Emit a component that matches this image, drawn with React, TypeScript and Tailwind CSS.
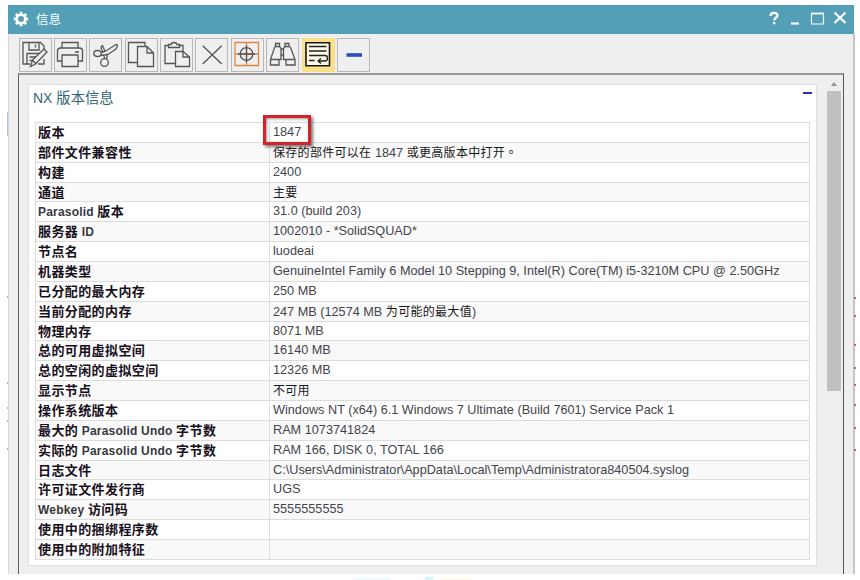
import type { ReactNode } from 'react';
import clsx from 'clsx';

const ROWS: [string, string][] = [
  ['版本', '1847'],
  ['部件文件兼容性', '保存的部件可以在 1847 或更高版本中打开。'],
  ['构建', '2400'],
  ['通道', '主要'],
  ['Parasolid 版本', '31.0 (build 203)'],
  ['服务器 ID', '1002010 - *SolidSQUAD*'],
  ['节点名', 'luodeai'],
  ['机器类型', 'GenuineIntel Family 6 Model 10 Stepping 9, Intel(R) Core(TM) i5-3210M CPU @ 2.50GHz'],
  ['已分配的最大内存', '250 MB'],
  ['当前分配的内存', '247 MB (12574 MB 为可能的最大值)'],
  ['物理内存', '8071 MB'],
  ['总的可用虚拟空间', '16140 MB'],
  ['总的空闲的虚拟空间', '12326 MB'],
  ['显示节点', '不可用'],
  ['操作系统版本', 'Windows NT (x64) 6.1 Windows 7 Ultimate (Build 7601) Service Pack 1'],
  ['最大的 Parasolid Undo 字节数', 'RAM 1073741824'],
  ['实际的 Parasolid Undo 字节数', 'RAM 166, DISK 0, TOTAL 166'],
  ['日志文件', 'C:\\Users\\Administrator\\AppData\\Local\\Temp\\Administratora840504.syslog'],
  ['许可证文件发行商', 'UGS'],
  ['Webkey 访问码', '5555555555'],
  ['使用中的捆绑程序数', ''],
  ['使用中的附加特征', ''],
];

/** Stray pixels of the window behind, along the right and left edge */
const RIGHT_SPECKS = [298, 316, 345, 368, 385, 405, 428, 450];
const LEFT_SPECKS = [297, 383, 408, 421, 449];

/** Chinese and Latin runs use different sizes and tracking */
function MixedText({ text, bold = false }: { text: string; bold?: boolean }) {
  const runs = text.split(/([\u4e00-\u9fff]+|。)/).filter(Boolean);
  return (
    <>
      {runs.map((run, i) => {
        if (!/[\u3000-\u9fff]/.test(run)) {
          return (
            <span
              key={i}
              className={bold ? 'text-[12px] font-bold tracking-[0.2px] text-[#38383e]' : 'text-[12.7px]'}
            >
              {run}
            </span>
          );
        }
        return (
          <span
            key={i}
            className={clsx(
              run === '。'
                ? "font-['Noto_Sans_CJK_TC',sans-serif]"
                : "font-['Noto_Sans_CJK_SC',sans-serif]",
              bold
                ? 'text-[13px] font-bold tracking-[0.4px] text-[#17101c]'
                : 'text-[12px] tracking-[0.3px] text-[#181818]',
            )}
          >
            {run}
          </span>
        );
      })}
    </>
  );
}

function ToolButton({ children, active = false }: { children?: ReactNode; active?: boolean }) {
  return (
    <button
      className={clsx(
        'flex h-[34px] w-[33px] shrink-0 items-center justify-center border',
        active ? 'border-[#f9dc83] bg-[#fbe08a]' : 'border-[#bcb6b3] bg-[#efefef]',
      )}
    >
      <svg
        viewBox="0 0 28 28"
        className="size-7 shrink-0"
        fill="none"
        stroke="#555"
        strokeWidth="1.3"
      >
        {children}
      </svg>
    </button>
  );
}

function Toolbar() {
  return (
    <div className="flex h-[39px] gap-[2.4px] pt-1 pl-[9.5px]">
      {/* save as */}
      <ToolButton>
        <path d="M9 23H2V1.500h17.500L23 5v6M8 1.500v7.500h10v-7.500M14.500 3.500v3M23 18v5h-6M6 23V12.500h13M8.500 16h7M8.500 19.500h3.500" />
        <path d="m9.500 25.500 2-6.500L23 8l3 3-11.500 12zM11.500 19l3.500 4" fill="#eee" />
      </ToolButton>
      {/* print */}
      <ToolButton>
        <path d="M6 6.500v-5h16v5M6 20H1.500V10q0-3 3-3h19q3 0 3 3v10H22M19 11h4" />
        <path d="M6 14h16v11.500H6z" />
      </ToolButton>
      {/* cut */}
      <ToolButton>
        <ellipse cx="5.500" cy="12.500" rx="3.800" ry="3" />
        <ellipse cx="12.500" cy="21.500" rx="3.800" ry="3.800" />
        <path d="M9.200 11.500 13 10.500 24 3.500q2-.5 1 2.500-1 3-4 4l-5 3.500-7.500 1M13 10.500l-2.500-6q-2 1-1 4l1.500 2.500M12 14.500l.5 3M15.500 13.500l-1 4.500" />
      </ToolButton>
      {/* copy */}
      <ToolButton>
        <path d="M10 21.500H1.500v-20H18v4" />
        <path d="M10.500 5.500H20l6.500 6.500v13.500h-16zM20 5.500V12h6.500" />
      </ToolButton>
      {/* paste */}
      <ToolButton>
        <path d="M12.500 22.500H2V4.500h3.500M16 4.500h4V10M5.500 6.500v-3h2.500q.5-2 3-2t3 2h2.500v3z" />
        <path d="M12.500 10.500H20l6.500 5.500v9.500h-14zM20 10.500V16h6.500" />
      </ToolButton>
      {/* delete */}
      <ToolButton>
        <path d="m4.700 4.700 19 18.300M23.700 4.700 4.700 23" />
      </ToolButton>
      {/* fit */}
      <ToolButton>
        <path d="M2 1.500h23.500v23H2zM13.500 1.500v23M2 13h23.500" stroke="#dc8745" />
        <circle cx="13.500" cy="13" r="6.300" />
        <path d="M13.500 4.500v17M5 13h17" />
      </ToolButton>
      {/* find */}
      <ToolButton>
        <path d="M6.500 2.500h4v3l1.500 2V18.500h-2v5.500H1.500v-5.500L5.500 6.500l1-1zM16 2.500h4v3l1.500 1 4.500 12v5.500H17v-5.500h-2.500v-11l1.500-2zM12 8h2.500M12 14h2.500M1.500 18.500H10M17 18.500h9M6.500 5.500h4M16 5.500h4" />
      </ToolButton>
      {/* word wrap */}
      <ToolButton active>
        <path d="M2 1.700h23.500v23H2z" fill="#fff9e8" stroke="#161616" strokeWidth="1.600" />
        <path
          d="M5 5.500h17.500M5 10h17.500M5 14.500h16q2.500 0 2.500 2.700T21 20h-6.500M17 17.500 14 20l3 2.500M5 19.500h5.500"
          stroke="#222"
        />
      </ToolButton>
      {/* collapse */}
      <ToolButton>
        <path d="M6.500 14h15.500" stroke="#294fc0" strokeWidth="3.600" />
      </ToolButton>
    </div>
  );
}

function TitleBar() {
  return (
    <div className="flex h-[29px] w-[846px] items-center bg-[#529fb7] pr-[7px] pb-px pl-[5px] text-white">
      <svg viewBox="0 0 16 16" className="size-4" fill="none" stroke="#fff">
        <circle cx="8" cy="8" r="4.300" strokeWidth="2.600" />
        <path
          d="M8 .8v2.500M8 12.700v2.500M.8 8h2.500M12.700 8h2.500M2.900 2.900l1.700 1.700M11.400 11.400l1.700 1.700M2.900 13.100l1.700-1.700M11.400 4.600l1.700-1.700"
          strokeWidth="2.800"
        />
      </svg>
      <span className="ml-[7px] font-['Noto_Sans_CJK_SC',sans-serif] text-[12.5px]">信息</span>
      <svg viewBox="0 0 86 16" className="ml-auto h-4 w-[86px]" fill="none" stroke="#fff">
        <path d="M9.500 5q.2-3.200 3.500-3.200t3.500 2.700c0 2.300-3.300 2.300-3.300 5M13.200 11v2.300" strokeWidth="2.300" />
        <path d="M30 12.500h8" strokeWidth="2.200" />
        <path d="M50.500 2.500h12v10.500h-12z" strokeWidth="1.200" />
        <path d="M50 2.500h13" strokeWidth="1.800" />
        <path d="m73.500 1.500 11 10.500M84.500 1.500 73.500 12" strokeWidth="2.200" />
      </svg>
    </div>
  );
}

function VersionCard() {
  return (
    <div className="h-[482px] w-[789px] border border-[#dfdfdf] bg-white pl-[6px]">
      <div className="flex h-[37px] items-start justify-between pr-1">
        <h1 className="-ml-[2px] pt-[2px] text-[14px] leading-5 text-[#326574]">
          NX <span className="font-['Noto_Sans_CJK_SC',sans-serif] text-[14.3px]">版本信息</span>
        </h1>
        <div className="mt-[7px] h-0.5 w-[9px] bg-[#2832a4]" />
      </div>
      <div className="w-[775px] border-t border-l border-[#dcdcdc]">
        {ROWS.map(([label, value], i) => (
          <div
            key={label}
            className={clsx(
              'flex h-[19.86px] items-center border-r border-b border-[#dcdcdc] text-[12px] leading-[17px] whitespace-pre text-[#44444c]',
              i % 2 ? 'bg-[#f9f9f9]' : 'bg-white',
            )}
          >
            <div className="h-full w-[234px] border-r border-[#dcdcdc] pl-[2px]">
              <MixedText text={label} bold />
            </div>
            <div className={clsx('relative h-full pl-[3px]', !/[\u3000-\u9fff]/.test(value) && 'pt-px')}>
              <MixedText text={value} />
              {i === 0 && (
                <div className="absolute -top-[8px] -left-[7px] h-[30px] w-12 border-[3px] border-[#d3232a] shadow-[2px_2px_3px_#777,inset_1px_1px_3px_#999]" />
              )}
            </div>
          </div>
        ))}
      </div>
    </div>
  );
}

export default function App() {
  return (
    <div className="relative h-[580px] w-[860px] overflow-hidden bg-white pt-[5px] pl-2 font-['Liberation_Sans',sans-serif]">
      <TitleBar />
      <div className="h-[540px] w-[847px] border-r-2 border-l border-r-[#c5c5c5] border-l-[#d5d5d5] bg-[#efefef]">
        <Toolbar />
        <div className="ml-[9px] flex h-[501px] w-[826px] border-t-2 border-r border-l border-t-[#969696] border-r-[#555] border-l-[#626262] pt-[9px] pl-[9px]">
          <VersionCard />
          <div className="-mt-[2px] ml-[10px] flex w-[14px] flex-col items-center">
            <svg viewBox="0 0 8 5" className="mb-[5px] h-[4px] w-2">
              <path d="M0 5 4 0l4 5z" fill="#999" />
            </svg>
            <div className="h-[300px] w-full bg-[#c0c0c0]" />
          </div>
        </div>
      </div>
      {RIGHT_SPECKS.map((y) => (
        <i key={y} className="absolute left-[854px] h-0.5 w-0.5 bg-[#b65db0]" style={{ top: y - 1 }} />
      ))}
      {LEFT_SPECKS.map((y) => (
        <i key={y} className="absolute left-[7px] h-0.5 w-px bg-[#c79ac6]" style={{ top: y - 1 }} />
      ))}
      <i className="absolute top-[112px] left-[7px] h-6 w-px bg-[#a9c6da]" />
      <i className="absolute top-[578px] left-[354px] h-0.5 w-[36px] bg-[#effbfb]" />
      <i className="absolute top-[577px] left-[425px] h-[3px] w-[8px] bg-[#d9f5f8]" />
      <i className="absolute top-[578px] left-[440px] h-0.5 w-[32px] bg-[#fdfbea]" />
    </div>
  );
}
